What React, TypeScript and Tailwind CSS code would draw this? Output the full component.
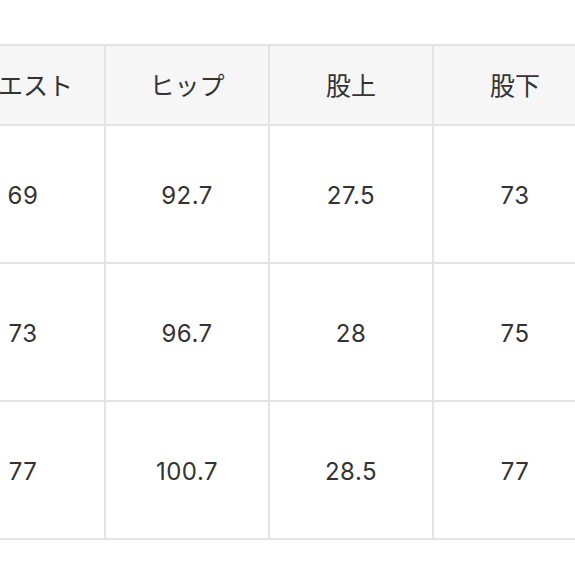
const headers = ['ウエスト', 'ヒップ', '股上', '股下', ''];

const rows = [
  ['69', '92.7', '27.5', '73', ''],
  ['73', '96.7', '28', '75', ''],
  ['77', '100.7', '28.5', '77', ''],
];

export default function App() {
  return (
    <div
      className="w-[575px] h-[575px] overflow-hidden bg-white pt-[44px]"
      style={{ fontFamily: 'Inter, "Noto Sans CJK JP", sans-serif' }}
    >
      <div className="ml-[-58px] w-[820px] border-t-2 border-[#e4e4e4] text-[#333333]">
        <div className="flex text-[25px]">
          {headers.map((h, i) => (
            <div
              key={i}
              className="w-[164px] h-[80px] shrink-0 flex items-center justify-center pt-1 bg-[#f6f6f6] border-r-2 border-b-2 border-[#e4e4e4]"
            >
              {h}
            </div>
          ))}
        </div>
        {rows.map((row, r) => (
          <div key={r} className="flex text-[24px] tracking-[0.5px]">
            {row.map((v, i) => (
              <div
                key={i}
                className="w-[164px] h-[138px] shrink-0 flex items-center justify-center pt-1 bg-white border-r-2 border-b-2 border-[#e4e4e4]"
              >
                {v}
              </div>
            ))}
          </div>
        ))}
      </div>
    </div>
  );
}
